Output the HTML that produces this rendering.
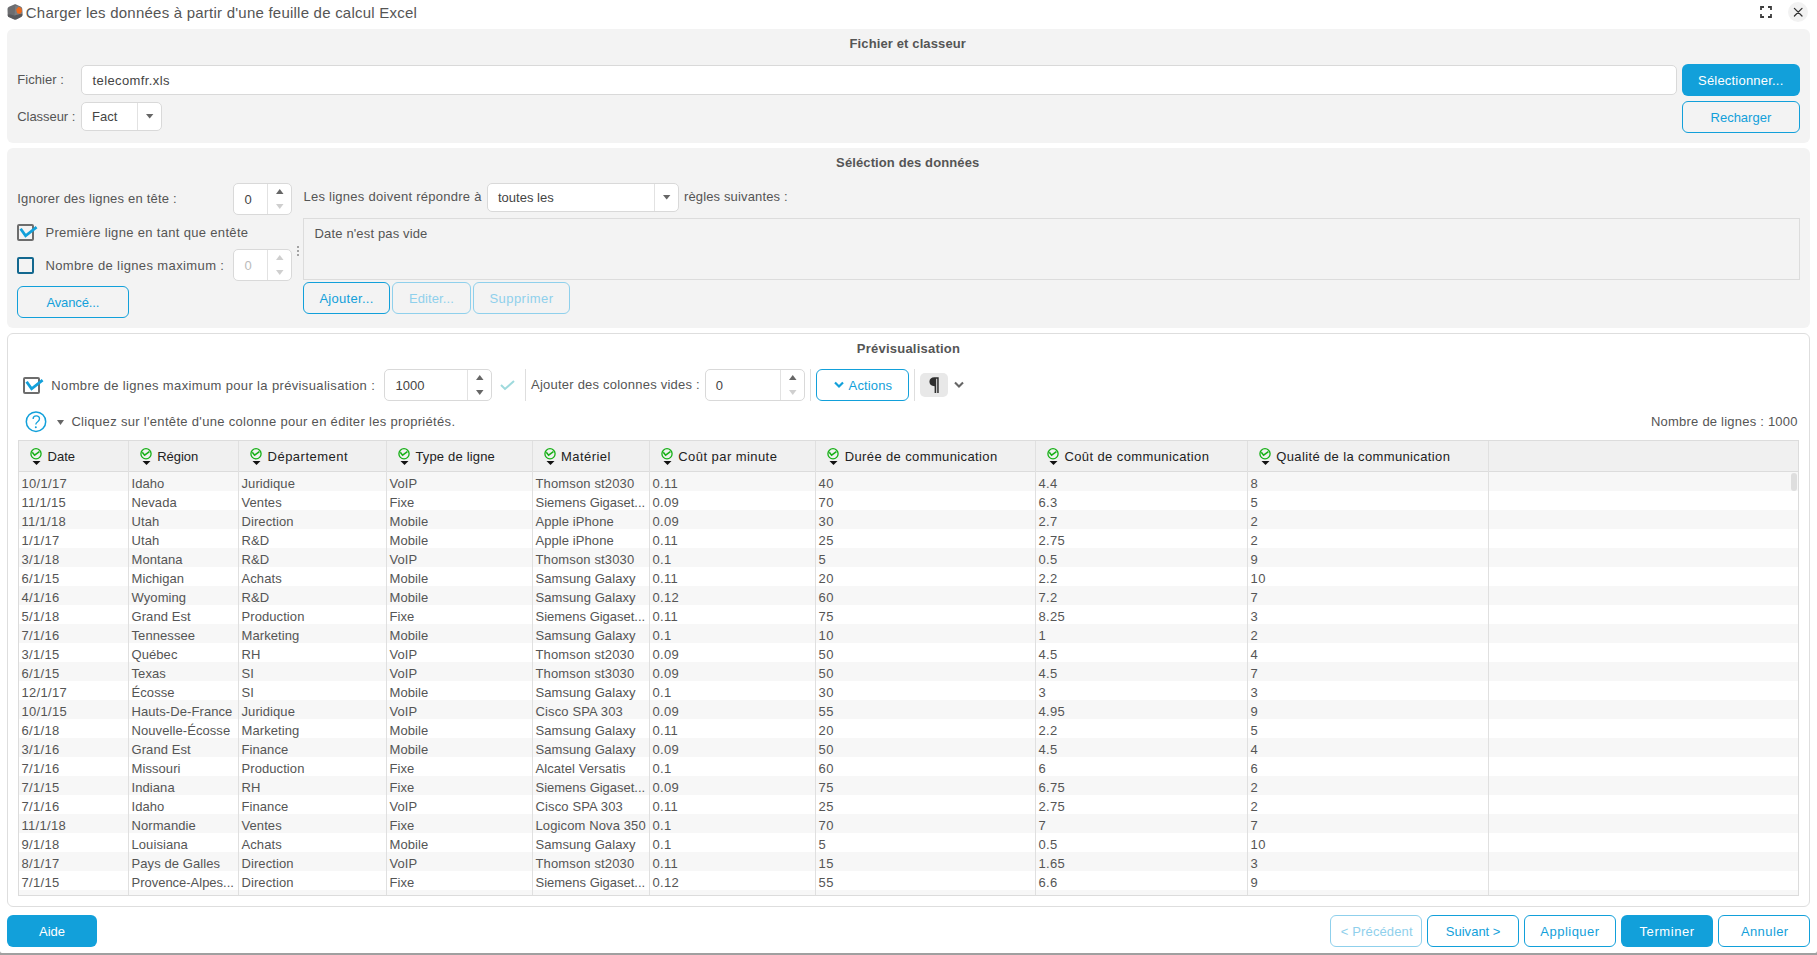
<!DOCTYPE html>
<html><head><meta charset="utf-8"><title>Charger les données</title>
<style>
*{box-sizing:border-box;margin:0;padding:0}
html,body{width:1817px;height:955px;overflow:hidden;background:#a0a0a0}
body{position:relative;font-family:"Liberation Sans",sans-serif;color:#555}
.t{position:absolute;white-space:nowrap}
.b{position:absolute}
svg{position:absolute;overflow:visible}
</style></head>
<body>
<div class="b" style="left:0px;top:0px;width:1817px;height:953px;background:#fff;border-radius:0 0 2px 2px;"></div>
<svg style="left:7px;top:4px" width="16" height="16" viewBox="0 0 16 16">
<path d="M7.2 0.4 C8 0.2 8.8 0.3 9.6 0.7 L13.6 2.6 C14.6 3.1 15.1 3.8 15.2 4.9 L15.4 10.8 C15.4 11.9 15 12.5 14 13.1 L9.6 15.3 C8.6 15.7 7.8 15.7 6.8 15.3 L2.4 13.3 C1.2 12.7 0.8 12 0.7 10.9 L0.5 5.2 C0.5 4 1 3.3 2 2.7 Z" fill="#6c6d70"/>
<path d="M0.8 10.6 C2.5 10.2 4.5 10.4 7.5 11.6 C10 10.6 12.5 9.9 15.4 10 L15.4 10.8 C15.4 11.9 15 12.5 14 13.1 L9.6 15.3 C8.6 15.7 7.8 15.7 6.8 15.3 L2.4 13.3 C1.2 12.7 0.8 12 0.7 10.9 Z" fill="#58595c"/>
<path d="M7.5 11.6 L8.2 2.2 C10 1.8 12.5 2.4 15.1 4.2 L15.4 10 C12.5 9.9 10 10.6 7.5 11.6 Z" fill="#7b7d80"/>
<path d="M11.6 2.8 L14.2 3.9 L15 7.4 L13.2 10 L10.2 9.3 L9.1 5.4 Z" fill="#ef6a1c"/>
</svg>
<div class="t" style="left:25.8px;top:5.10px;font-size:15px;line-height:15px;letter-spacing:0.227px;">Charger les données à partir d&#x27;une feuille de calcul Excel</div>
<svg style="left:1760px;top:6px" width="12" height="12" viewBox="0 0 12 12" fill="none" stroke="#3d3d3d" stroke-width="1.8" stroke-linecap="butt">
<path d="M1 4 V1 H4 M8 1 H11 V4 M11 8 V11 H8 M4 11 H1 V8"/>
</svg>
<div class="b" style="left:1788px;top:2px;width:20px;height:20px;background:#f2f2f2;border-radius:50%;"></div>
<svg style="left:1793px;top:7px" width="10" height="10" viewBox="0 0 10 10" fill="none" stroke="#333" stroke-width="1.25" stroke-linecap="round">
<path d="M1.4 1.4 L9 9 M9 1.4 L1.4 9"/>
</svg>
<div class="b" style="left:7px;top:29px;width:1803px;height:114px;background:#f3f3f3;border-radius:6px;"></div>
<div class="t" style="left:849.5px;top:36.99px;font-size:13px;line-height:13px;font-weight:700;letter-spacing:0.125px;">Fichier et classeur</div>
<div class="t" style="left:17.2px;top:72.99px;font-size:13px;line-height:13px;letter-spacing:0.069px;">Fichier :</div>
<div class="b" style="left:81px;top:65px;width:1596px;height:30px;background:#fff;border:1px solid #d9d9d9;border-radius:5px;"></div>
<div class="t" style="left:92.5px;top:74.49px;font-size:13px;line-height:13px;color:#444;letter-spacing:0.396px;">telecomfr.xls</div>
<div class="t" style="left:17.2px;top:109.99px;font-size:13px;line-height:13px;letter-spacing:-0.044px;">Classeur :</div>
<div class="b" style="left:81px;top:102px;width:81px;height:29px;background:#fff;border:1px solid #d9d9d9;border-radius:5px;"></div>
<div class="b" style="left:137px;top:103px;width:1px;height:27px;background:#e2e2e2;"></div>
<svg style="left:145.8px;top:114.2px" width="7.4" height="4.6"><path d="M0 0 H7.4 L3.7 4.6 Z" fill="#666"/></svg>
<div class="t" style="left:92px;top:110.29px;font-size:13px;line-height:13px;color:#444;">Fact</div>
<div class="b" style="left:1682px;top:64px;width:118px;height:32px;background:#12a0da;border-radius:6px;"></div>
<div class="t" style="left:1698.0px;top:73.79px;font-size:13px;line-height:13px;color:#fff;letter-spacing:0.207px;">Sélectionner...</div>
<div class="b" style="left:1682px;top:101px;width:118px;height:32px;border:1.5px solid #12a0da;border-radius:6px;"></div>
<div class="t" style="left:1710.5px;top:110.79px;font-size:13px;line-height:13px;color:#12a0da;letter-spacing:0.006px;">Recharger</div>
<div class="b" style="left:7px;top:148px;width:1803px;height:180px;background:#f3f3f3;border-radius:6px;"></div>
<div class="t" style="left:836.1px;top:156.29px;font-size:13px;line-height:13px;font-weight:700;letter-spacing:0.115px;">Séléction des données</div>
<div class="t" style="left:17.2px;top:191.99px;font-size:13px;line-height:13px;letter-spacing:0.207px;">Ignorer des lignes en tête :</div>
<div class="b" style="left:233px;top:183px;width:59px;height:32px;background:#fff;border:1px solid #d9d9d9;border-radius:5px;"></div>
<div class="b" style="left:267px;top:184px;width:1px;height:30px;background:#e2e2e2;"></div>
<svg style="left:275.75px;top:189.14px" width="7.5" height="5"><path d="M0 5 H7.5 L3.75 0 Z" fill="#666"/></svg>
<svg style="left:275.75px;top:203.86px" width="7.5" height="5"><path d="M0 0 H7.5 L3.75 5 Z" fill="#cfcfcf"/></svg>
<div class="t" style="left:244.5px;top:192.79px;font-size:13px;line-height:13px;color:#444;">0</div>
<div class="b" style="left:17px;top:224px;width:17px;height:17px;border:2px solid #6d6d6d;border-radius:2px;"></div>
<svg style="left:17px;top:224px" width="20" height="17" viewBox="0 0 20 17" fill="none" stroke="#12a0da" stroke-width="2.8" stroke-linecap="butt" stroke-linejoin="miter">
<path d="M3.6 4.8 L8.6 11.8 L19.6 3.2"/></svg>
<div class="t" style="left:45.4px;top:225.99px;font-size:13px;line-height:13px;letter-spacing:0.327px;">Première ligne en tant que entête</div>
<div class="b" style="left:17px;top:257px;width:17px;height:17px;border:2px solid #13688f;border-radius:2px;"></div>
<div class="t" style="left:45.4px;top:258.99px;font-size:13px;line-height:13px;letter-spacing:0.38px;">Nombre de lignes maximum :</div>
<div class="b" style="left:233px;top:249px;width:59px;height:32px;background:#fff;border:1px solid #d9d9d9;border-radius:5px;"></div>
<div class="b" style="left:267px;top:250px;width:1px;height:30px;background:#e2e2e2;"></div>
<svg style="left:275.75px;top:255.14px" width="7.5" height="5"><path d="M0 5 H7.5 L3.75 0 Z" fill="#cfcfcf"/></svg>
<svg style="left:275.75px;top:269.86px" width="7.5" height="5"><path d="M0 0 H7.5 L3.75 5 Z" fill="#cfcfcf"/></svg>
<div class="t" style="left:244.5px;top:258.79px;font-size:13px;line-height:13px;color:#bbb;">0</div>
<div class="b" style="left:17px;top:286px;width:112px;height:32px;border:1.5px solid #12a0da;border-radius:6px;"></div>
<div class="t" style="left:46.4px;top:295.79px;font-size:13px;line-height:13px;color:#12a0da;letter-spacing:-0.125px;">Avancé...</div>
<div class="b" style="left:297px;top:246px;width:2px;height:2px;background:#888;border-radius:1px;"></div>
<div class="b" style="left:297px;top:250px;width:2px;height:2px;background:#888;border-radius:1px;"></div>
<div class="b" style="left:297px;top:254px;width:2px;height:2px;background:#888;border-radius:1px;"></div>
<div class="t" style="left:303.4px;top:190.49px;font-size:13px;line-height:13px;letter-spacing:0.268px;">Les lignes doivent répondre à</div>
<div class="b" style="left:487px;top:183px;width:192px;height:29px;background:#fff;border:1px solid #d9d9d9;border-radius:5px;"></div>
<div class="b" style="left:654px;top:184px;width:1px;height:27px;background:#e2e2e2;"></div>
<svg style="left:662.8px;top:195.2px" width="7.4" height="4.6"><path d="M0 0 H7.4 L3.7 4.6 Z" fill="#666"/></svg>
<div class="t" style="left:498px;top:191.29px;font-size:13px;line-height:13px;color:#444;">toutes les</div>
<div class="t" style="left:684.0px;top:190.49px;font-size:13px;line-height:13px;letter-spacing:0.138px;">règles suivantes :</div>
<div class="b" style="left:303px;top:218px;width:1497px;height:62px;border:1px solid #dcdcdc;"></div>
<div class="t" style="left:314.6px;top:227.49px;font-size:13px;line-height:13px;letter-spacing:0.142px;">Date n&#x27;est pas vide</div>
<div class="b" style="left:303px;top:282px;width:87px;height:32px;border:1.5px solid #12a0da;border-radius:6px;"></div>
<div class="t" style="left:319.4px;top:291.79px;font-size:13px;line-height:13px;color:#12a0da;letter-spacing:0.294px;">Ajouter...</div>
<div class="b" style="left:392px;top:282px;width:79px;height:32px;border:1.5px solid #8fd0ec;border-radius:6px;"></div>
<div class="t" style="left:408.9px;top:291.79px;font-size:13px;line-height:13px;color:#8fd0ec;letter-spacing:0.113px;">Editer...</div>
<div class="b" style="left:473px;top:282px;width:97px;height:32px;border:1.5px solid #8fd0ec;border-radius:6px;"></div>
<div class="t" style="left:489.4px;top:291.79px;font-size:13px;line-height:13px;color:#8fd0ec;letter-spacing:0.463px;">Supprimer</div>
<div class="b" style="left:7px;top:333px;width:1803px;height:574px;background:#fff;border:1px solid #dedede;border-radius:6px;"></div>
<div class="t" style="left:856.8px;top:341.99px;font-size:13px;line-height:13px;font-weight:700;letter-spacing:0.23px;">Prévisualisation</div>
<div class="b" style="left:23px;top:377px;width:17px;height:17px;border:2px solid #6d6d6d;border-radius:2px;"></div>
<svg style="left:23px;top:377px" width="20" height="17" viewBox="0 0 20 17" fill="none" stroke="#12a0da" stroke-width="2.8" stroke-linecap="butt" stroke-linejoin="miter">
<path d="M3.6 4.8 L8.6 11.8 L19.6 3.2"/></svg>
<div class="t" style="left:51.3px;top:378.99px;font-size:13px;line-height:13px;letter-spacing:0.357px;">Nombre de lignes maximum pour la prévisualisation :</div>
<div class="b" style="left:384px;top:369px;width:108px;height:32px;background:#fff;border:1px solid #d9d9d9;border-radius:5px;"></div>
<div class="b" style="left:467px;top:370px;width:1px;height:30px;background:#e2e2e2;"></div>
<svg style="left:475.75px;top:375.14px" width="7.5" height="5"><path d="M0 5 H7.5 L3.75 0 Z" fill="#666"/></svg>
<svg style="left:475.75px;top:389.86px" width="7.5" height="5"><path d="M0 0 H7.5 L3.75 5 Z" fill="#666"/></svg>
<div class="t" style="left:395.6px;top:378.79px;font-size:13px;line-height:13px;color:#444;">1000</div>
<svg style="left:500px;top:380px" width="15" height="10" viewBox="0 0 15 10" fill="none" stroke="#9fdadd" stroke-width="2">
<path d="M1 5 L5 9 L14 1"/></svg>
<div class="b" style="left:525px;top:369px;width:1px;height:32px;background:#dedede;"></div>
<div class="t" style="left:531.1px;top:377.99px;font-size:13px;line-height:13px;letter-spacing:0.219px;">Ajouter des colonnes vides :</div>
<div class="b" style="left:705px;top:369px;width:100px;height:32px;background:#fff;border:1px solid #d9d9d9;border-radius:5px;"></div>
<div class="b" style="left:780px;top:370px;width:1px;height:30px;background:#e2e2e2;"></div>
<svg style="left:788.75px;top:375.14px" width="7.5" height="5"><path d="M0 5 H7.5 L3.75 0 Z" fill="#666"/></svg>
<svg style="left:788.75px;top:389.86px" width="7.5" height="5"><path d="M0 0 H7.5 L3.75 5 Z" fill="#cfcfcf"/></svg>
<div class="t" style="left:715.8px;top:378.79px;font-size:13px;line-height:13px;color:#444;">0</div>
<div class="b" style="left:810px;top:369px;width:1px;height:32px;background:#dedede;"></div>
<div class="b" style="left:816px;top:369px;width:93px;height:32px;border:1.5px solid #12a0da;border-radius:6px;"></div>
<svg style="left:834px;top:381px" width="10" height="8" viewBox="0 0 10 8" fill="none" stroke="#12a0da" stroke-width="2.2">
<path d="M1 1.5 L5 5.5 L9 1.5"/></svg>
<div class="t" style="left:848.6px;top:378.99px;font-size:13px;line-height:13px;color:#12a0da;letter-spacing:0.142px;">Actions</div>
<div class="b" style="left:914px;top:369px;width:1px;height:32px;background:#dedede;"></div>
<div class="b" style="left:920px;top:373px;width:28px;height:24px;background:#e8e8e8;border-radius:5px;"></div>
<svg style="left:929.2px;top:376.8px" width="10" height="17" viewBox="0 0 10 17">
<path d="M5.4 0.3 H9.7 V16 H8.2 V1.7 H7.2 V16 H5.6 V9.2 C2.4 9.2 0.4 7.6 0.4 4.8 C0.4 2 2.4 0.3 5.4 0.3 Z" fill="#2e2e2e"/></svg>
<svg style="left:954px;top:381px" width="10" height="8" viewBox="0 0 10 8" fill="none" stroke="#666" stroke-width="2.1">
<path d="M1 1.5 L5 5.5 L9 1.5"/></svg>
<svg style="left:25px;top:411px" width="22" height="22" viewBox="0 0 22 22">
<circle cx="11" cy="10.7" r="9.7" fill="none" stroke="#12a0da" stroke-width="1.5"/>
<path d="M8.1 7.9 C8.1 5.8 9.5 4.9 11.3 4.9 C13.2 4.9 14.5 6 14.5 7.8 C14.5 9.4 13.5 10.2 12.4 11 C11.2 11.8 10.8 12.4 10.8 13.6" fill="none" stroke="#12a0da" stroke-width="1.3"/>
<circle cx="10.8" cy="16.2" r="1" fill="#12a0da"/></svg>
<svg style="left:57.0px;top:419.5px" width="7" height="5"><path d="M0 0 H7 L3.5 5 Z" fill="#666"/></svg>
<div class="t" style="left:71.4px;top:414.99px;font-size:13px;line-height:13px;letter-spacing:0.316px;">Cliquez sur l&#x27;entête d&#x27;une colonne pour en éditer les propriétés.</div>
<div class="t" style="left:1651.0px;top:414.99px;font-size:13px;line-height:13px;letter-spacing:0.22px;">Nombre de lignes : 1000</div>
<div class="b" style="left:18px;top:440px;width:1781px;height:456px;background:#fff;border:1px solid #dcdcdc;"></div>
<div class="b" style="left:19px;top:441px;width:1779px;height:30px;background:#f0f0f0;"></div>
<div class="b" style="left:19px;top:471px;width:1779px;height:1px;background:#dcdcdc;"></div>
<div class="b" style="left:19px;top:472px;width:1779px;height:19px;background:#f7f7f7;"></div>
<div class="b" style="left:19px;top:510px;width:1779px;height:19px;background:#f7f7f7;"></div>
<div class="b" style="left:19px;top:548px;width:1779px;height:19px;background:#f7f7f7;"></div>
<div class="b" style="left:19px;top:586px;width:1779px;height:19px;background:#f7f7f7;"></div>
<div class="b" style="left:19px;top:624px;width:1779px;height:19px;background:#f7f7f7;"></div>
<div class="b" style="left:19px;top:662px;width:1779px;height:19px;background:#f7f7f7;"></div>
<div class="b" style="left:19px;top:700px;width:1779px;height:19px;background:#f7f7f7;"></div>
<div class="b" style="left:19px;top:738px;width:1779px;height:19px;background:#f7f7f7;"></div>
<div class="b" style="left:19px;top:776px;width:1779px;height:19px;background:#f7f7f7;"></div>
<div class="b" style="left:19px;top:814px;width:1779px;height:19px;background:#f7f7f7;"></div>
<div class="b" style="left:19px;top:852px;width:1779px;height:19px;background:#f7f7f7;"></div>
<div class="b" style="left:19px;top:890px;width:1779px;height:5px;background:#f7f7f7;"></div>
<div class="b" style="left:128px;top:441px;width:1px;height:454px;background:#e0e0e0;"></div>
<div class="b" style="left:238px;top:441px;width:1px;height:454px;background:#e0e0e0;"></div>
<div class="b" style="left:386px;top:441px;width:1px;height:454px;background:#e0e0e0;"></div>
<div class="b" style="left:532px;top:441px;width:1px;height:454px;background:#e0e0e0;"></div>
<div class="b" style="left:649px;top:441px;width:1px;height:454px;background:#e0e0e0;"></div>
<div class="b" style="left:815px;top:441px;width:1px;height:454px;background:#e0e0e0;"></div>
<div class="b" style="left:1035px;top:441px;width:1px;height:454px;background:#e0e0e0;"></div>
<div class="b" style="left:1247px;top:441px;width:1px;height:454px;background:#e0e0e0;"></div>
<div class="b" style="left:1488px;top:441px;width:1px;height:454px;background:#e0e0e0;"></div>
<svg style="left:30px;top:448px" width="12" height="18" viewBox="0 0 12 18">
<circle cx="6" cy="5.8" r="5.1" fill="none" stroke="#16b016" stroke-width="1.3"/>
<path d="M2.3 4.2 L4.6 7.2 L9.4 3.7" fill="none" stroke="#16b016" stroke-width="1.5"/>
<path d="M2.5 13 H10.5 L6.5 17 Z" fill="#111"/></svg>
<div class="t" style="left:47.6px;top:450.29px;font-size:13px;line-height:13px;color:#222;">Date</div>
<svg style="left:140px;top:448px" width="12" height="18" viewBox="0 0 12 18">
<circle cx="6" cy="5.8" r="5.1" fill="none" stroke="#16b016" stroke-width="1.3"/>
<path d="M2.3 4.2 L4.6 7.2 L9.4 3.7" fill="none" stroke="#16b016" stroke-width="1.5"/>
<path d="M2.5 13 H10.5 L6.5 17 Z" fill="#111"/></svg>
<div class="t" style="left:157.3px;top:450.29px;font-size:13px;line-height:13px;color:#222;letter-spacing:-0.07px;">Région</div>
<svg style="left:250px;top:448px" width="12" height="18" viewBox="0 0 12 18">
<circle cx="6" cy="5.8" r="5.1" fill="none" stroke="#16b016" stroke-width="1.3"/>
<path d="M2.3 4.2 L4.6 7.2 L9.4 3.7" fill="none" stroke="#16b016" stroke-width="1.5"/>
<path d="M2.5 13 H10.5 L6.5 17 Z" fill="#111"/></svg>
<div class="t" style="left:267.5px;top:450.29px;font-size:13px;line-height:13px;color:#222;letter-spacing:0.505px;">Département</div>
<svg style="left:398px;top:448px" width="12" height="18" viewBox="0 0 12 18">
<circle cx="6" cy="5.8" r="5.1" fill="none" stroke="#16b016" stroke-width="1.3"/>
<path d="M2.3 4.2 L4.6 7.2 L9.4 3.7" fill="none" stroke="#16b016" stroke-width="1.5"/>
<path d="M2.5 13 H10.5 L6.5 17 Z" fill="#111"/></svg>
<div class="t" style="left:415.4px;top:450.29px;font-size:13px;line-height:13px;color:#222;letter-spacing:0.171px;">Type de ligne</div>
<svg style="left:544px;top:448px" width="12" height="18" viewBox="0 0 12 18">
<circle cx="6" cy="5.8" r="5.1" fill="none" stroke="#16b016" stroke-width="1.3"/>
<path d="M2.3 4.2 L4.6 7.2 L9.4 3.7" fill="none" stroke="#16b016" stroke-width="1.5"/>
<path d="M2.5 13 H10.5 L6.5 17 Z" fill="#111"/></svg>
<div class="t" style="left:561.0px;top:450.29px;font-size:13px;line-height:13px;color:#222;letter-spacing:0.45px;">Matériel</div>
<svg style="left:661px;top:448px" width="12" height="18" viewBox="0 0 12 18">
<circle cx="6" cy="5.8" r="5.1" fill="none" stroke="#16b016" stroke-width="1.3"/>
<path d="M2.3 4.2 L4.6 7.2 L9.4 3.7" fill="none" stroke="#16b016" stroke-width="1.5"/>
<path d="M2.5 13 H10.5 L6.5 17 Z" fill="#111"/></svg>
<div class="t" style="left:678.3px;top:450.29px;font-size:13px;line-height:13px;color:#222;letter-spacing:0.436px;">Coût par minute</div>
<svg style="left:827px;top:448px" width="12" height="18" viewBox="0 0 12 18">
<circle cx="6" cy="5.8" r="5.1" fill="none" stroke="#16b016" stroke-width="1.3"/>
<path d="M2.3 4.2 L4.6 7.2 L9.4 3.7" fill="none" stroke="#16b016" stroke-width="1.5"/>
<path d="M2.5 13 H10.5 L6.5 17 Z" fill="#111"/></svg>
<div class="t" style="left:844.7px;top:450.29px;font-size:13px;line-height:13px;color:#222;letter-spacing:0.381px;">Durée de communication</div>
<svg style="left:1047px;top:448px" width="12" height="18" viewBox="0 0 12 18">
<circle cx="6" cy="5.8" r="5.1" fill="none" stroke="#16b016" stroke-width="1.3"/>
<path d="M2.3 4.2 L4.6 7.2 L9.4 3.7" fill="none" stroke="#16b016" stroke-width="1.5"/>
<path d="M2.5 13 H10.5 L6.5 17 Z" fill="#111"/></svg>
<div class="t" style="left:1064.4px;top:450.29px;font-size:13px;line-height:13px;color:#222;letter-spacing:0.4px;">Coût de communication</div>
<svg style="left:1259px;top:448px" width="12" height="18" viewBox="0 0 12 18">
<circle cx="6" cy="5.8" r="5.1" fill="none" stroke="#16b016" stroke-width="1.3"/>
<path d="M2.3 4.2 L4.6 7.2 L9.4 3.7" fill="none" stroke="#16b016" stroke-width="1.5"/>
<path d="M2.5 13 H10.5 L6.5 17 Z" fill="#111"/></svg>
<div class="t" style="left:1276.2px;top:450.29px;font-size:13px;line-height:13px;color:#222;letter-spacing:0.373px;">Qualité de la communication</div>
<div class="t" style="left:21.5px;top:476.99px;font-size:13px;line-height:13px;letter-spacing:0.313px;">10/1/17</div>
<div class="t" style="left:131.5px;top:476.99px;font-size:13px;line-height:13px;letter-spacing:0.08px;">Idaho</div>
<div class="t" style="left:241.5px;top:476.99px;font-size:13px;line-height:13px;letter-spacing:0.08px;">Juridique</div>
<div class="t" style="left:389.5px;top:476.99px;font-size:13px;line-height:13px;letter-spacing:0.08px;">VoIP</div>
<div class="t" style="left:535.5px;top:476.99px;font-size:13px;line-height:13px;letter-spacing:0.142px;">Thomson st2030</div>
<div class="t" style="left:652.5px;top:476.99px;font-size:13px;line-height:13px;letter-spacing:0.28px;">0.11</div>
<div class="t" style="left:818.5px;top:476.99px;font-size:13px;line-height:13px;letter-spacing:0.48px;">40</div>
<div class="t" style="left:1038.5px;top:476.99px;font-size:13px;line-height:13px;letter-spacing:0.28px;">4.4</div>
<div class="t" style="left:1250.5px;top:476.99px;font-size:13px;line-height:13px;letter-spacing:0.2px;">8</div>
<div class="t" style="left:21.5px;top:495.99px;font-size:13px;line-height:13px;letter-spacing:0.313px;">11/1/15</div>
<div class="t" style="left:131.5px;top:495.99px;font-size:13px;line-height:13px;letter-spacing:0.08px;">Nevada</div>
<div class="t" style="left:241.5px;top:495.99px;font-size:13px;line-height:13px;letter-spacing:0.08px;">Ventes</div>
<div class="t" style="left:389.5px;top:495.99px;font-size:13px;line-height:13px;letter-spacing:0.08px;">Fixe</div>
<div class="t" style="left:535.5px;top:495.99px;font-size:13px;line-height:13px;letter-spacing:-0.008px;">Siemens Gigaset...</div>
<div class="t" style="left:652.5px;top:495.99px;font-size:13px;line-height:13px;letter-spacing:0.28px;">0.09</div>
<div class="t" style="left:818.5px;top:495.99px;font-size:13px;line-height:13px;letter-spacing:0.48px;">70</div>
<div class="t" style="left:1038.5px;top:495.99px;font-size:13px;line-height:13px;letter-spacing:0.28px;">6.3</div>
<div class="t" style="left:1250.5px;top:495.99px;font-size:13px;line-height:13px;letter-spacing:0.2px;">5</div>
<div class="t" style="left:21.5px;top:514.99px;font-size:13px;line-height:13px;letter-spacing:0.313px;">11/1/18</div>
<div class="t" style="left:131.5px;top:514.99px;font-size:13px;line-height:13px;letter-spacing:0.08px;">Utah</div>
<div class="t" style="left:241.5px;top:514.99px;font-size:13px;line-height:13px;letter-spacing:0.08px;">Direction</div>
<div class="t" style="left:389.5px;top:514.99px;font-size:13px;line-height:13px;letter-spacing:0.08px;">Mobile</div>
<div class="t" style="left:535.5px;top:514.99px;font-size:13px;line-height:13px;letter-spacing:0.08px;">Apple iPhone</div>
<div class="t" style="left:652.5px;top:514.99px;font-size:13px;line-height:13px;letter-spacing:0.28px;">0.09</div>
<div class="t" style="left:818.5px;top:514.99px;font-size:13px;line-height:13px;letter-spacing:0.48px;">30</div>
<div class="t" style="left:1038.5px;top:514.99px;font-size:13px;line-height:13px;letter-spacing:0.28px;">2.7</div>
<div class="t" style="left:1250.5px;top:514.99px;font-size:13px;line-height:13px;letter-spacing:0.2px;">2</div>
<div class="t" style="left:21.5px;top:533.99px;font-size:13px;line-height:13px;letter-spacing:0.32px;">1/1/17</div>
<div class="t" style="left:131.5px;top:533.99px;font-size:13px;line-height:13px;letter-spacing:0.08px;">Utah</div>
<div class="t" style="left:241.5px;top:533.99px;font-size:13px;line-height:13px;letter-spacing:0.08px;">R&amp;D</div>
<div class="t" style="left:389.5px;top:533.99px;font-size:13px;line-height:13px;letter-spacing:0.08px;">Mobile</div>
<div class="t" style="left:535.5px;top:533.99px;font-size:13px;line-height:13px;letter-spacing:0.08px;">Apple iPhone</div>
<div class="t" style="left:652.5px;top:533.99px;font-size:13px;line-height:13px;letter-spacing:0.28px;">0.11</div>
<div class="t" style="left:818.5px;top:533.99px;font-size:13px;line-height:13px;letter-spacing:0.48px;">25</div>
<div class="t" style="left:1038.5px;top:533.99px;font-size:13px;line-height:13px;letter-spacing:0.28px;">2.75</div>
<div class="t" style="left:1250.5px;top:533.99px;font-size:13px;line-height:13px;letter-spacing:0.2px;">2</div>
<div class="t" style="left:21.5px;top:552.99px;font-size:13px;line-height:13px;letter-spacing:0.32px;">3/1/18</div>
<div class="t" style="left:131.5px;top:552.99px;font-size:13px;line-height:13px;letter-spacing:0.08px;">Montana</div>
<div class="t" style="left:241.5px;top:552.99px;font-size:13px;line-height:13px;letter-spacing:0.08px;">R&amp;D</div>
<div class="t" style="left:389.5px;top:552.99px;font-size:13px;line-height:13px;letter-spacing:0.08px;">VoIP</div>
<div class="t" style="left:535.5px;top:552.99px;font-size:13px;line-height:13px;letter-spacing:0.142px;">Thomson st3030</div>
<div class="t" style="left:652.5px;top:552.99px;font-size:13px;line-height:13px;letter-spacing:0.28px;">0.1</div>
<div class="t" style="left:818.5px;top:552.99px;font-size:13px;line-height:13px;letter-spacing:0.2px;">5</div>
<div class="t" style="left:1038.5px;top:552.99px;font-size:13px;line-height:13px;letter-spacing:0.28px;">0.5</div>
<div class="t" style="left:1250.5px;top:552.99px;font-size:13px;line-height:13px;letter-spacing:0.2px;">9</div>
<div class="t" style="left:21.5px;top:571.99px;font-size:13px;line-height:13px;letter-spacing:0.32px;">6/1/15</div>
<div class="t" style="left:131.5px;top:571.99px;font-size:13px;line-height:13px;letter-spacing:0.08px;">Michigan</div>
<div class="t" style="left:241.5px;top:571.99px;font-size:13px;line-height:13px;letter-spacing:0.08px;">Achats</div>
<div class="t" style="left:389.5px;top:571.99px;font-size:13px;line-height:13px;letter-spacing:0.08px;">Mobile</div>
<div class="t" style="left:535.5px;top:571.99px;font-size:13px;line-height:13px;letter-spacing:0.08px;">Samsung Galaxy</div>
<div class="t" style="left:652.5px;top:571.99px;font-size:13px;line-height:13px;letter-spacing:0.28px;">0.11</div>
<div class="t" style="left:818.5px;top:571.99px;font-size:13px;line-height:13px;letter-spacing:0.48px;">20</div>
<div class="t" style="left:1038.5px;top:571.99px;font-size:13px;line-height:13px;letter-spacing:0.28px;">2.2</div>
<div class="t" style="left:1250.5px;top:571.99px;font-size:13px;line-height:13px;letter-spacing:0.48px;">10</div>
<div class="t" style="left:21.5px;top:590.99px;font-size:13px;line-height:13px;letter-spacing:0.32px;">4/1/16</div>
<div class="t" style="left:131.5px;top:590.99px;font-size:13px;line-height:13px;letter-spacing:0.08px;">Wyoming</div>
<div class="t" style="left:241.5px;top:590.99px;font-size:13px;line-height:13px;letter-spacing:0.08px;">R&amp;D</div>
<div class="t" style="left:389.5px;top:590.99px;font-size:13px;line-height:13px;letter-spacing:0.08px;">Mobile</div>
<div class="t" style="left:535.5px;top:590.99px;font-size:13px;line-height:13px;letter-spacing:0.08px;">Samsung Galaxy</div>
<div class="t" style="left:652.5px;top:590.99px;font-size:13px;line-height:13px;letter-spacing:0.28px;">0.12</div>
<div class="t" style="left:818.5px;top:590.99px;font-size:13px;line-height:13px;letter-spacing:0.48px;">60</div>
<div class="t" style="left:1038.5px;top:590.99px;font-size:13px;line-height:13px;letter-spacing:0.28px;">7.2</div>
<div class="t" style="left:1250.5px;top:590.99px;font-size:13px;line-height:13px;letter-spacing:0.2px;">7</div>
<div class="t" style="left:21.5px;top:609.99px;font-size:13px;line-height:13px;letter-spacing:0.32px;">5/1/18</div>
<div class="t" style="left:131.5px;top:609.99px;font-size:13px;line-height:13px;letter-spacing:0.08px;">Grand Est</div>
<div class="t" style="left:241.5px;top:609.99px;font-size:13px;line-height:13px;letter-spacing:0.08px;">Production</div>
<div class="t" style="left:389.5px;top:609.99px;font-size:13px;line-height:13px;letter-spacing:0.08px;">Fixe</div>
<div class="t" style="left:535.5px;top:609.99px;font-size:13px;line-height:13px;letter-spacing:-0.008px;">Siemens Gigaset...</div>
<div class="t" style="left:652.5px;top:609.99px;font-size:13px;line-height:13px;letter-spacing:0.28px;">0.11</div>
<div class="t" style="left:818.5px;top:609.99px;font-size:13px;line-height:13px;letter-spacing:0.48px;">75</div>
<div class="t" style="left:1038.5px;top:609.99px;font-size:13px;line-height:13px;letter-spacing:0.28px;">8.25</div>
<div class="t" style="left:1250.5px;top:609.99px;font-size:13px;line-height:13px;letter-spacing:0.2px;">3</div>
<div class="t" style="left:21.5px;top:628.99px;font-size:13px;line-height:13px;letter-spacing:0.32px;">7/1/16</div>
<div class="t" style="left:131.5px;top:628.99px;font-size:13px;line-height:13px;letter-spacing:0.08px;">Tennessee</div>
<div class="t" style="left:241.5px;top:628.99px;font-size:13px;line-height:13px;letter-spacing:0.08px;">Marketing</div>
<div class="t" style="left:389.5px;top:628.99px;font-size:13px;line-height:13px;letter-spacing:0.08px;">Mobile</div>
<div class="t" style="left:535.5px;top:628.99px;font-size:13px;line-height:13px;letter-spacing:0.08px;">Samsung Galaxy</div>
<div class="t" style="left:652.5px;top:628.99px;font-size:13px;line-height:13px;letter-spacing:0.28px;">0.1</div>
<div class="t" style="left:818.5px;top:628.99px;font-size:13px;line-height:13px;letter-spacing:0.48px;">10</div>
<div class="t" style="left:1038.5px;top:628.99px;font-size:13px;line-height:13px;letter-spacing:0.2px;">1</div>
<div class="t" style="left:1250.5px;top:628.99px;font-size:13px;line-height:13px;letter-spacing:0.2px;">2</div>
<div class="t" style="left:21.5px;top:647.99px;font-size:13px;line-height:13px;letter-spacing:0.32px;">3/1/15</div>
<div class="t" style="left:131.5px;top:647.99px;font-size:13px;line-height:13px;letter-spacing:0.08px;">Québec</div>
<div class="t" style="left:241.5px;top:647.99px;font-size:13px;line-height:13px;letter-spacing:0.08px;">RH</div>
<div class="t" style="left:389.5px;top:647.99px;font-size:13px;line-height:13px;letter-spacing:0.08px;">VoIP</div>
<div class="t" style="left:535.5px;top:647.99px;font-size:13px;line-height:13px;letter-spacing:0.142px;">Thomson st2030</div>
<div class="t" style="left:652.5px;top:647.99px;font-size:13px;line-height:13px;letter-spacing:0.28px;">0.09</div>
<div class="t" style="left:818.5px;top:647.99px;font-size:13px;line-height:13px;letter-spacing:0.48px;">50</div>
<div class="t" style="left:1038.5px;top:647.99px;font-size:13px;line-height:13px;letter-spacing:0.28px;">4.5</div>
<div class="t" style="left:1250.5px;top:647.99px;font-size:13px;line-height:13px;letter-spacing:0.2px;">4</div>
<div class="t" style="left:21.5px;top:666.99px;font-size:13px;line-height:13px;letter-spacing:0.32px;">6/1/15</div>
<div class="t" style="left:131.5px;top:666.99px;font-size:13px;line-height:13px;letter-spacing:0.08px;">Texas</div>
<div class="t" style="left:241.5px;top:666.99px;font-size:13px;line-height:13px;letter-spacing:0.08px;">SI</div>
<div class="t" style="left:389.5px;top:666.99px;font-size:13px;line-height:13px;letter-spacing:0.08px;">VoIP</div>
<div class="t" style="left:535.5px;top:666.99px;font-size:13px;line-height:13px;letter-spacing:0.142px;">Thomson st3030</div>
<div class="t" style="left:652.5px;top:666.99px;font-size:13px;line-height:13px;letter-spacing:0.28px;">0.09</div>
<div class="t" style="left:818.5px;top:666.99px;font-size:13px;line-height:13px;letter-spacing:0.48px;">50</div>
<div class="t" style="left:1038.5px;top:666.99px;font-size:13px;line-height:13px;letter-spacing:0.28px;">4.5</div>
<div class="t" style="left:1250.5px;top:666.99px;font-size:13px;line-height:13px;letter-spacing:0.2px;">7</div>
<div class="t" style="left:21.5px;top:685.99px;font-size:13px;line-height:13px;letter-spacing:0.313px;">12/1/17</div>
<div class="t" style="left:131.5px;top:685.99px;font-size:13px;line-height:13px;letter-spacing:0.08px;">Écosse</div>
<div class="t" style="left:241.5px;top:685.99px;font-size:13px;line-height:13px;letter-spacing:0.08px;">SI</div>
<div class="t" style="left:389.5px;top:685.99px;font-size:13px;line-height:13px;letter-spacing:0.08px;">Mobile</div>
<div class="t" style="left:535.5px;top:685.99px;font-size:13px;line-height:13px;letter-spacing:0.08px;">Samsung Galaxy</div>
<div class="t" style="left:652.5px;top:685.99px;font-size:13px;line-height:13px;letter-spacing:0.28px;">0.1</div>
<div class="t" style="left:818.5px;top:685.99px;font-size:13px;line-height:13px;letter-spacing:0.48px;">30</div>
<div class="t" style="left:1038.5px;top:685.99px;font-size:13px;line-height:13px;letter-spacing:0.2px;">3</div>
<div class="t" style="left:1250.5px;top:685.99px;font-size:13px;line-height:13px;letter-spacing:0.2px;">3</div>
<div class="t" style="left:21.5px;top:704.99px;font-size:13px;line-height:13px;letter-spacing:0.313px;">10/1/15</div>
<div class="t" style="left:131.5px;top:704.99px;font-size:13px;line-height:13px;letter-spacing:0.08px;">Hauts-De-France</div>
<div class="t" style="left:241.5px;top:704.99px;font-size:13px;line-height:13px;letter-spacing:0.08px;">Juridique</div>
<div class="t" style="left:389.5px;top:704.99px;font-size:13px;line-height:13px;letter-spacing:0.08px;">VoIP</div>
<div class="t" style="left:535.5px;top:704.99px;font-size:13px;line-height:13px;letter-spacing:0.13px;">Cisco SPA 303</div>
<div class="t" style="left:652.5px;top:704.99px;font-size:13px;line-height:13px;letter-spacing:0.28px;">0.09</div>
<div class="t" style="left:818.5px;top:704.99px;font-size:13px;line-height:13px;letter-spacing:0.48px;">55</div>
<div class="t" style="left:1038.5px;top:704.99px;font-size:13px;line-height:13px;letter-spacing:0.28px;">4.95</div>
<div class="t" style="left:1250.5px;top:704.99px;font-size:13px;line-height:13px;letter-spacing:0.2px;">9</div>
<div class="t" style="left:21.5px;top:723.99px;font-size:13px;line-height:13px;letter-spacing:0.32px;">6/1/18</div>
<div class="t" style="left:131.5px;top:723.99px;font-size:13px;line-height:13px;letter-spacing:0.08px;">Nouvelle-Écosse</div>
<div class="t" style="left:241.5px;top:723.99px;font-size:13px;line-height:13px;letter-spacing:0.08px;">Marketing</div>
<div class="t" style="left:389.5px;top:723.99px;font-size:13px;line-height:13px;letter-spacing:0.08px;">Mobile</div>
<div class="t" style="left:535.5px;top:723.99px;font-size:13px;line-height:13px;letter-spacing:0.08px;">Samsung Galaxy</div>
<div class="t" style="left:652.5px;top:723.99px;font-size:13px;line-height:13px;letter-spacing:0.28px;">0.11</div>
<div class="t" style="left:818.5px;top:723.99px;font-size:13px;line-height:13px;letter-spacing:0.48px;">20</div>
<div class="t" style="left:1038.5px;top:723.99px;font-size:13px;line-height:13px;letter-spacing:0.28px;">2.2</div>
<div class="t" style="left:1250.5px;top:723.99px;font-size:13px;line-height:13px;letter-spacing:0.2px;">5</div>
<div class="t" style="left:21.5px;top:742.99px;font-size:13px;line-height:13px;letter-spacing:0.32px;">3/1/16</div>
<div class="t" style="left:131.5px;top:742.99px;font-size:13px;line-height:13px;letter-spacing:0.08px;">Grand Est</div>
<div class="t" style="left:241.5px;top:742.99px;font-size:13px;line-height:13px;letter-spacing:0.08px;">Finance</div>
<div class="t" style="left:389.5px;top:742.99px;font-size:13px;line-height:13px;letter-spacing:0.08px;">Mobile</div>
<div class="t" style="left:535.5px;top:742.99px;font-size:13px;line-height:13px;letter-spacing:0.08px;">Samsung Galaxy</div>
<div class="t" style="left:652.5px;top:742.99px;font-size:13px;line-height:13px;letter-spacing:0.28px;">0.09</div>
<div class="t" style="left:818.5px;top:742.99px;font-size:13px;line-height:13px;letter-spacing:0.48px;">50</div>
<div class="t" style="left:1038.5px;top:742.99px;font-size:13px;line-height:13px;letter-spacing:0.28px;">4.5</div>
<div class="t" style="left:1250.5px;top:742.99px;font-size:13px;line-height:13px;letter-spacing:0.2px;">4</div>
<div class="t" style="left:21.5px;top:761.99px;font-size:13px;line-height:13px;letter-spacing:0.32px;">7/1/16</div>
<div class="t" style="left:131.5px;top:761.99px;font-size:13px;line-height:13px;letter-spacing:0.08px;">Missouri</div>
<div class="t" style="left:241.5px;top:761.99px;font-size:13px;line-height:13px;letter-spacing:0.08px;">Production</div>
<div class="t" style="left:389.5px;top:761.99px;font-size:13px;line-height:13px;letter-spacing:0.08px;">Fixe</div>
<div class="t" style="left:535.5px;top:761.99px;font-size:13px;line-height:13px;letter-spacing:0.08px;">Alcatel Versatis</div>
<div class="t" style="left:652.5px;top:761.99px;font-size:13px;line-height:13px;letter-spacing:0.28px;">0.1</div>
<div class="t" style="left:818.5px;top:761.99px;font-size:13px;line-height:13px;letter-spacing:0.48px;">60</div>
<div class="t" style="left:1038.5px;top:761.99px;font-size:13px;line-height:13px;letter-spacing:0.2px;">6</div>
<div class="t" style="left:1250.5px;top:761.99px;font-size:13px;line-height:13px;letter-spacing:0.2px;">6</div>
<div class="t" style="left:21.5px;top:780.99px;font-size:13px;line-height:13px;letter-spacing:0.32px;">7/1/15</div>
<div class="t" style="left:131.5px;top:780.99px;font-size:13px;line-height:13px;letter-spacing:0.08px;">Indiana</div>
<div class="t" style="left:241.5px;top:780.99px;font-size:13px;line-height:13px;letter-spacing:0.08px;">RH</div>
<div class="t" style="left:389.5px;top:780.99px;font-size:13px;line-height:13px;letter-spacing:0.08px;">Fixe</div>
<div class="t" style="left:535.5px;top:780.99px;font-size:13px;line-height:13px;letter-spacing:-0.008px;">Siemens Gigaset...</div>
<div class="t" style="left:652.5px;top:780.99px;font-size:13px;line-height:13px;letter-spacing:0.28px;">0.09</div>
<div class="t" style="left:818.5px;top:780.99px;font-size:13px;line-height:13px;letter-spacing:0.48px;">75</div>
<div class="t" style="left:1038.5px;top:780.99px;font-size:13px;line-height:13px;letter-spacing:0.28px;">6.75</div>
<div class="t" style="left:1250.5px;top:780.99px;font-size:13px;line-height:13px;letter-spacing:0.2px;">2</div>
<div class="t" style="left:21.5px;top:799.99px;font-size:13px;line-height:13px;letter-spacing:0.32px;">7/1/16</div>
<div class="t" style="left:131.5px;top:799.99px;font-size:13px;line-height:13px;letter-spacing:0.08px;">Idaho</div>
<div class="t" style="left:241.5px;top:799.99px;font-size:13px;line-height:13px;letter-spacing:0.08px;">Finance</div>
<div class="t" style="left:389.5px;top:799.99px;font-size:13px;line-height:13px;letter-spacing:0.08px;">VoIP</div>
<div class="t" style="left:535.5px;top:799.99px;font-size:13px;line-height:13px;letter-spacing:0.13px;">Cisco SPA 303</div>
<div class="t" style="left:652.5px;top:799.99px;font-size:13px;line-height:13px;letter-spacing:0.28px;">0.11</div>
<div class="t" style="left:818.5px;top:799.99px;font-size:13px;line-height:13px;letter-spacing:0.48px;">25</div>
<div class="t" style="left:1038.5px;top:799.99px;font-size:13px;line-height:13px;letter-spacing:0.28px;">2.75</div>
<div class="t" style="left:1250.5px;top:799.99px;font-size:13px;line-height:13px;letter-spacing:0.2px;">2</div>
<div class="t" style="left:21.5px;top:818.99px;font-size:13px;line-height:13px;letter-spacing:0.313px;">11/1/18</div>
<div class="t" style="left:131.5px;top:818.99px;font-size:13px;line-height:13px;letter-spacing:0.08px;">Normandie</div>
<div class="t" style="left:241.5px;top:818.99px;font-size:13px;line-height:13px;letter-spacing:0.08px;">Ventes</div>
<div class="t" style="left:389.5px;top:818.99px;font-size:13px;line-height:13px;letter-spacing:0.08px;">Fixe</div>
<div class="t" style="left:535.5px;top:818.99px;font-size:13px;line-height:13px;letter-spacing:0.12px;">Logicom Nova 350</div>
<div class="t" style="left:652.5px;top:818.99px;font-size:13px;line-height:13px;letter-spacing:0.28px;">0.1</div>
<div class="t" style="left:818.5px;top:818.99px;font-size:13px;line-height:13px;letter-spacing:0.48px;">70</div>
<div class="t" style="left:1038.5px;top:818.99px;font-size:13px;line-height:13px;letter-spacing:0.2px;">7</div>
<div class="t" style="left:1250.5px;top:818.99px;font-size:13px;line-height:13px;letter-spacing:0.2px;">7</div>
<div class="t" style="left:21.5px;top:837.99px;font-size:13px;line-height:13px;letter-spacing:0.32px;">9/1/18</div>
<div class="t" style="left:131.5px;top:837.99px;font-size:13px;line-height:13px;letter-spacing:0.08px;">Louisiana</div>
<div class="t" style="left:241.5px;top:837.99px;font-size:13px;line-height:13px;letter-spacing:0.08px;">Achats</div>
<div class="t" style="left:389.5px;top:837.99px;font-size:13px;line-height:13px;letter-spacing:0.08px;">Mobile</div>
<div class="t" style="left:535.5px;top:837.99px;font-size:13px;line-height:13px;letter-spacing:0.08px;">Samsung Galaxy</div>
<div class="t" style="left:652.5px;top:837.99px;font-size:13px;line-height:13px;letter-spacing:0.28px;">0.1</div>
<div class="t" style="left:818.5px;top:837.99px;font-size:13px;line-height:13px;letter-spacing:0.2px;">5</div>
<div class="t" style="left:1038.5px;top:837.99px;font-size:13px;line-height:13px;letter-spacing:0.28px;">0.5</div>
<div class="t" style="left:1250.5px;top:837.99px;font-size:13px;line-height:13px;letter-spacing:0.48px;">10</div>
<div class="t" style="left:21.5px;top:856.99px;font-size:13px;line-height:13px;letter-spacing:0.32px;">8/1/17</div>
<div class="t" style="left:131.5px;top:856.99px;font-size:13px;line-height:13px;letter-spacing:0.08px;">Pays de Galles</div>
<div class="t" style="left:241.5px;top:856.99px;font-size:13px;line-height:13px;letter-spacing:0.08px;">Direction</div>
<div class="t" style="left:389.5px;top:856.99px;font-size:13px;line-height:13px;letter-spacing:0.08px;">VoIP</div>
<div class="t" style="left:535.5px;top:856.99px;font-size:13px;line-height:13px;letter-spacing:0.142px;">Thomson st2030</div>
<div class="t" style="left:652.5px;top:856.99px;font-size:13px;line-height:13px;letter-spacing:0.28px;">0.11</div>
<div class="t" style="left:818.5px;top:856.99px;font-size:13px;line-height:13px;letter-spacing:0.48px;">15</div>
<div class="t" style="left:1038.5px;top:856.99px;font-size:13px;line-height:13px;letter-spacing:0.28px;">1.65</div>
<div class="t" style="left:1250.5px;top:856.99px;font-size:13px;line-height:13px;letter-spacing:0.2px;">3</div>
<div class="t" style="left:21.5px;top:875.99px;font-size:13px;line-height:13px;letter-spacing:0.32px;">7/1/15</div>
<div class="t" style="left:131.5px;top:875.99px;font-size:13px;line-height:13px;letter-spacing:-0.014px;">Provence-Alpes...</div>
<div class="t" style="left:241.5px;top:875.99px;font-size:13px;line-height:13px;letter-spacing:0.08px;">Direction</div>
<div class="t" style="left:389.5px;top:875.99px;font-size:13px;line-height:13px;letter-spacing:0.08px;">Fixe</div>
<div class="t" style="left:535.5px;top:875.99px;font-size:13px;line-height:13px;letter-spacing:-0.008px;">Siemens Gigaset...</div>
<div class="t" style="left:652.5px;top:875.99px;font-size:13px;line-height:13px;letter-spacing:0.28px;">0.12</div>
<div class="t" style="left:818.5px;top:875.99px;font-size:13px;line-height:13px;letter-spacing:0.48px;">55</div>
<div class="t" style="left:1038.5px;top:875.99px;font-size:13px;line-height:13px;letter-spacing:0.28px;">6.6</div>
<div class="t" style="left:1250.5px;top:875.99px;font-size:13px;line-height:13px;letter-spacing:0.2px;">9</div>
<div class="b" style="left:1791px;top:473px;width:6px;height:18px;background:#dedede;border-radius:3px;"></div>
<div class="b" style="left:7px;top:915px;width:90px;height:32px;background:#12a0da;border-radius:6px;"></div>
<div class="t" style="left:39.0px;top:924.79px;font-size:13px;line-height:13px;color:#fff;">Aide</div>
<div class="b" style="left:1330px;top:915px;width:92px;height:32px;border:1.5px solid #8fd0ec;border-radius:6px;"></div>
<div class="t" style="left:1340.8px;top:924.79px;font-size:13px;line-height:13px;color:#8fd0ec;letter-spacing:0.13px;">&lt; Précédent</div>
<div class="b" style="left:1427px;top:915px;width:92px;height:32px;border:1.5px solid #12a0da;border-radius:6px;"></div>
<div class="t" style="left:1445.8px;top:924.79px;font-size:13px;line-height:13px;color:#12a0da;letter-spacing:0.013px;">Suivant &gt;</div>
<div class="b" style="left:1524px;top:915px;width:92px;height:32px;border:1.5px solid #12a0da;border-radius:6px;"></div>
<div class="t" style="left:1540.3px;top:924.79px;font-size:13px;line-height:13px;color:#12a0da;letter-spacing:0.488px;">Appliquer</div>
<div class="b" style="left:1621px;top:915px;width:92px;height:32px;background:#12a0da;border-radius:6px;"></div>
<div class="t" style="left:1639.5px;top:924.79px;font-size:13px;line-height:13px;color:#fff;letter-spacing:0.586px;">Terminer</div>
<div class="b" style="left:1718px;top:915px;width:92px;height:32px;border:1.5px solid #12a0da;border-radius:6px;"></div>
<div class="t" style="left:1740.9px;top:924.79px;font-size:13px;line-height:13px;color:#12a0da;letter-spacing:0.408px;">Annuler</div>
</body></html>
